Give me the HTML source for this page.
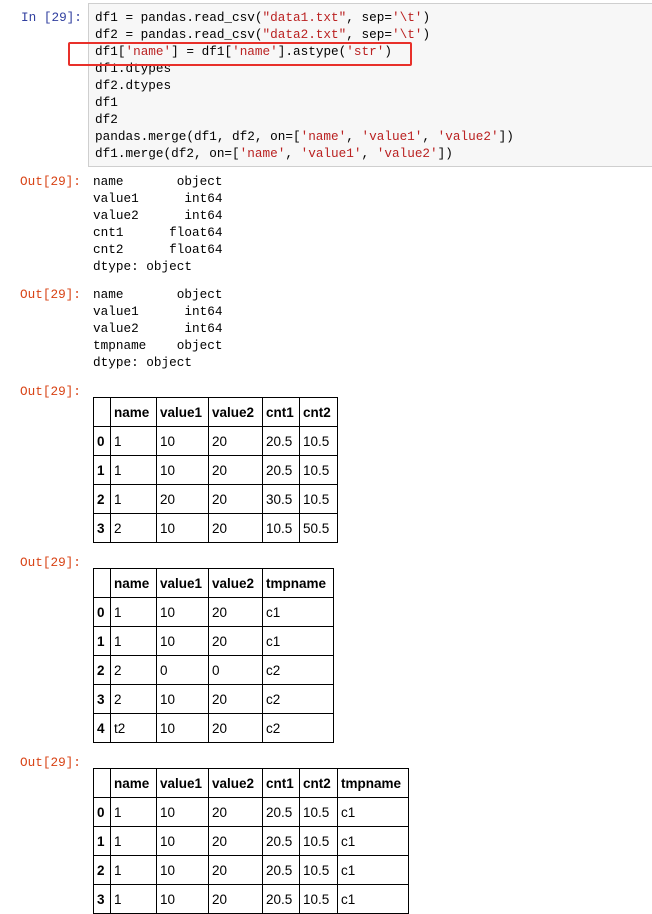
<!DOCTYPE html>
<html><head><meta charset="utf-8"><style>
body{margin:0;width:652px;height:896px;overflow:hidden;background:#fff;position:relative;font-family:"Liberation Sans",sans-serif}
.mono{font-family:"Liberation Mono",monospace;font-size:12.7px;line-height:17px;white-space:pre;position:absolute}
.in{color:#303f9f}
.out{color:#d84315}
.s{color:#ba2121}
.code{position:absolute;left:88px;top:3px;width:600px;height:162px;background:#f7f7f7;border:1px solid #cfcfcf}
table{position:absolute;border-collapse:collapse;font-size:13.5px;color:#000;table-layout:fixed}
td,th{border:1px solid #000;height:28px;padding:0 0 0 3px;text-align:left;overflow:hidden;white-space:nowrap}
th{font-weight:bold}
.red{position:absolute;left:68px;top:42px;width:340px;height:20px;border:2px solid #e8302a;border-radius:2px}
</style></head><body>
<div class="code"></div>
<div class="mono in" style="left:21px;top:9px">In [29]:</div>
<div class="mono" style="left:95px;top:9px;color:#000">df1 = pandas.read_csv(<span class="s">"data1.txt"</span>, sep=<span class="s">'\t'</span>)
df2 = pandas.read_csv(<span class="s">"data2.txt"</span>, sep=<span class="s">'\t'</span>)
df1[<span class="s">'name'</span>] = df1[<span class="s">'name'</span>].astype(<span class="s">'str'</span>)
df1.dtypes
df2.dtypes
df1
df2
pandas.merge(df1, df2, on=[<span class="s">'name'</span>, <span class="s">'value1'</span>, <span class="s">'value2'</span>])
df1.merge(df2, on=[<span class="s">'name'</span>, <span class="s">'value1'</span>, <span class="s">'value2'</span>])</div>
<div class="red"></div>

<div class="mono out" style="left:20px;top:173px">Out[29]:</div>
<div class="mono" style="left:93px;top:173px">name       object
value1      int64
value2      int64
cnt1      float64
cnt2      float64
dtype: object</div>

<div class="mono out" style="left:20px;top:286px">Out[29]:</div>
<div class="mono" style="left:93px;top:286px">name       object
value1      int64
value2      int64
tmpname    object
dtype: object</div>

<div class="mono out" style="left:20px;top:383px">Out[29]:</div>
<table style="left:93px;top:397px;width:245px">
<colgroup><col style="width:17px"><col style="width:46px"><col style="width:52px"><col style="width:54px"><col style="width:37px"><col style="width:38px"></colgroup>
<tr><th></th><th>name</th><th>value1</th><th>value2</th><th>cnt1</th><th>cnt2</th></tr>
<tr><th>0</th><td>1</td><td>10</td><td>20</td><td>20.5</td><td>10.5</td></tr>
<tr><th>1</th><td>1</td><td>10</td><td>20</td><td>20.5</td><td>10.5</td></tr>
<tr><th>2</th><td>1</td><td>20</td><td>20</td><td>30.5</td><td>10.5</td></tr>
<tr><th>3</th><td>2</td><td>10</td><td>20</td><td>10.5</td><td>50.5</td></tr>
</table>

<div class="mono out" style="left:20px;top:554px">Out[29]:</div>
<table style="left:93px;top:568px;width:240px">
<colgroup><col style="width:17px"><col style="width:46px"><col style="width:52px"><col style="width:54px"><col style="width:71px"></colgroup>
<tr><th></th><th>name</th><th>value1</th><th>value2</th><th>tmpname</th></tr>
<tr><th>0</th><td>1</td><td>10</td><td>20</td><td>c1</td></tr>
<tr><th>1</th><td>1</td><td>10</td><td>20</td><td>c1</td></tr>
<tr><th>2</th><td>2</td><td>0</td><td>0</td><td>c2</td></tr>
<tr><th>3</th><td>2</td><td>10</td><td>20</td><td>c2</td></tr>
<tr><th>4</th><td>t2</td><td>10</td><td>20</td><td>c2</td></tr>
</table>

<div class="mono out" style="left:20px;top:754px">Out[29]:</div>
<table style="left:93px;top:768px;width:315px">
<colgroup><col style="width:17px"><col style="width:46px"><col style="width:52px"><col style="width:54px"><col style="width:37px"><col style="width:38px"><col style="width:71px"></colgroup>
<tr><th></th><th>name</th><th>value1</th><th>value2</th><th>cnt1</th><th>cnt2</th><th>tmpname</th></tr>
<tr><th>0</th><td>1</td><td>10</td><td>20</td><td>20.5</td><td>10.5</td><td>c1</td></tr>
<tr><th>1</th><td>1</td><td>10</td><td>20</td><td>20.5</td><td>10.5</td><td>c1</td></tr>
<tr><th>2</th><td>1</td><td>10</td><td>20</td><td>20.5</td><td>10.5</td><td>c1</td></tr>
<tr><th>3</th><td>1</td><td>10</td><td>20</td><td>20.5</td><td>10.5</td><td>c1</td></tr>
</table>
</body></html>
